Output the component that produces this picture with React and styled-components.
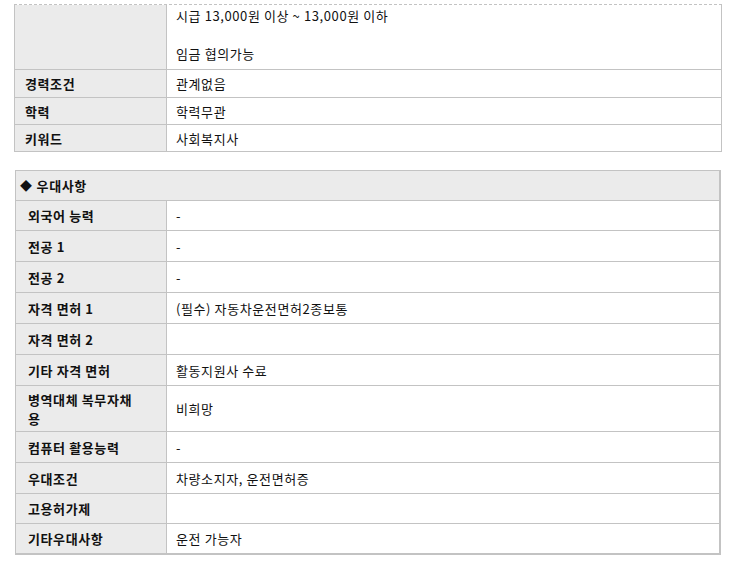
import styled, { createGlobalStyle } from "styled-components"

const GlobalStyle = createGlobalStyle`
  html, body {
    margin: 0;
    padding: 0;
    background: #fff;
  }
  body {
    font-family: "Noto Sans CJK KR", "Noto Sans", sans-serif;
    font-size: 13px;
    letter-spacing: 0.6px;
    color: #111;
  }
  * {
    box-sizing: border-box;
  }
`

const Page = styled.div`
  padding-top: 4px;
  width: 738px;
`

const InfoTable = styled.div`
  margin-left: ${(p) => p.$left}px;
  width: ${(p) => p.$width}px;
  margin-top: ${(p) => p.$top || 0}px;
  border: 1px solid #c3c3c3;
  border-top: 1px ${(p) => (p.$dashed ? "dashed" : "solid")} #c3c3c3;
  border-bottom: none;
  border-right-width: ${(p) => p.$edge || 1}px;

  & > div:last-child {
    border-bottom-width: ${(p) => p.$edge || 1}px;
  }
`

const Row = styled.div`
  display: grid;
  grid-template-columns: ${(p) => p.$labelWidth}px 1fr;
  height: ${(p) => p.$h}px;
  border-bottom: 1px solid #c3c3c3;
`

const Label = styled.div`
  display: flex;
  align-items: center;
  background: #ebebeb;
  border-right: 1px solid #c3c3c3;
  padding-left: ${(p) => p.$pad}px;
  font-weight: bold;
  line-height: 19px;
`

const Value = styled.div`
  display: flex;
  align-items: center;
  padding-left: 9px;
  line-height: 19px;
`

const WageValue = styled(Value)`
  align-items: flex-start;
  padding-top: 1px;
`

const SectionHeader = styled.div`
  display: flex;
  align-items: center;
  gap: 4px;
  height: 30px;
  padding-left: 4px;
  background: #ebebeb;
  border-bottom: 1px solid #c3c3c3;
  font-weight: bold;
`

const Diamond = styled.span`
  font-size: 12px;
  line-height: 1;
`

const basicRows = [
  { label: "경력조건", value: "관계없음", h: 28 },
  { label: "학력", value: "학력무관", h: 27 },
  { label: "키워드", value: "사회복지사", h: 27 },
]

const prefRows = [
  { label: "외국어 능력", value: "-", h: 30 },
  { label: "전공 1", value: "-", h: 31 },
  { label: "전공 2", value: "-", h: 31 },
  { label: "자격 면허 1", value: "(필수) 자동차운전면허2종보통", h: 31 },
  { label: "자격 면허 2", value: "", h: 31 },
  { label: "기타 자격 면허", value: "활동지원사 수료", h: 31 },
  {
    label: (
      <>
        병역대체 복무자채
        <br />
        용
      </>
    ),
    value: "비희망",
    h: 46,
  },
  { label: "컴퓨터 활용능력", value: "-", h: 31 },
  { label: "우대조건", value: "차량소지자, 운전면허증", h: 31 },
  { label: "고용허가제", value: "", h: 30 },
  { label: "기타우대사항", value: "운전 가능자", h: 31 },
]

export default function App() {
  return (
    <Page>
      <GlobalStyle />
      <InfoTable $left={14} $width={708} $dashed>
        <Row $labelWidth={152} $h={65}>
          <Label $pad={10} />
          <WageValue>
            시급 13,000원 이상 ~ 13,000원 이하
            <br />
            <br />
            임금 협의가능
          </WageValue>
        </Row>
        {basicRows.map((r) => (
          <Row key={r.label} $labelWidth={152} $h={r.h}>
            <Label $pad={10}>{r.label}</Label>
            <Value>{r.value}</Value>
          </Row>
        ))}
      </InfoTable>

      <InfoTable $left={15} $width={706} $top={18} $edge={2}>
        <SectionHeader>
          <Diamond>◆</Diamond>
          우대사항
        </SectionHeader>
        {prefRows.map((r, i) => (
          <Row key={i} $labelWidth={151} $h={r.h}>
            <Label $pad={12}>{r.label}</Label>
            <Value>{r.value}</Value>
          </Row>
        ))}
      </InfoTable>
    </Page>
  )
}
